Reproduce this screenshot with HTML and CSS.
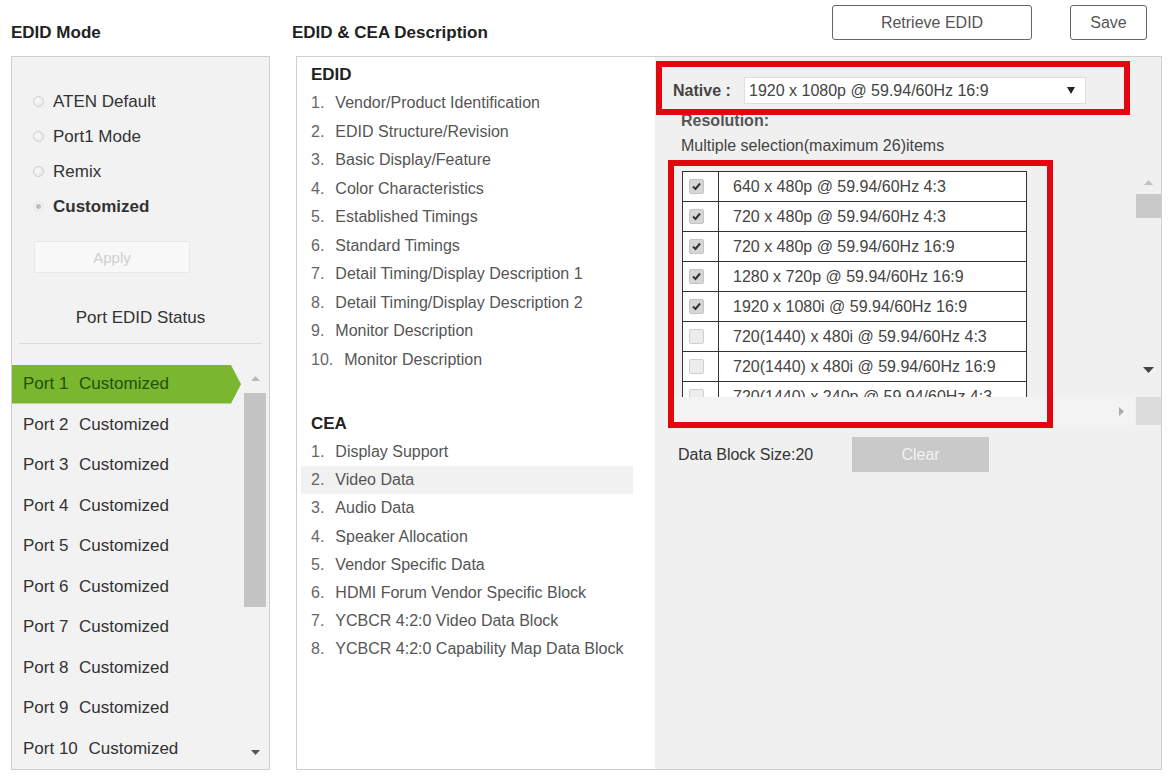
FILE: index.html
```html
<!doctype html>
<html lang="en">
<head>
    <meta charset="UTF-8">
    <meta name="viewport" content="width=device-width, initial-scale=1.0">
    <title>EDID Settings</title>

    <link rel="stylesheet" href="styles.css">
</head>
<body>

<div class="page">
    <div class="col-head">
        <h2 class="title">EDID Mode</h2>
    </div>
    <div class="col-head col-head-main">
        <h2 class="title">EDID &amp; CEA Description</h2>
        <div class="head-btns">
            <button class="btn btn-retrieve">Retrieve EDID</button>
            <button class="btn btn-save">Save</button>
        </div>
    </div>

    <aside class="panel mode-panel">
        <ul class="radios">
            <li><span class="radio"></span>ATEN Default</li>
            <li><span class="radio"></span>Port1 Mode</li>
            <li><span class="radio"></span>Remix</li>
            <li class="on"><span class="radio"></span>Customized</li>
        </ul>
        <button class="btn-apply" disabled>Apply</button>
        <div class="status-title">Port EDID Status</div>
        <div class="sep"></div>

        <div class="port-box">
            <ul class="ports">
                <li class="active"><span class="pn">Port 1</span> Customized</li>
                <li><span class="pn">Port 2</span> Customized</li>
                <li><span class="pn">Port 3</span> Customized</li>
                <li><span class="pn">Port 4</span> Customized</li>
                <li><span class="pn">Port 5</span> Customized</li>
                <li><span class="pn">Port 6</span> Customized</li>
                <li><span class="pn">Port 7</span> Customized</li>
                <li><span class="pn">Port 8</span> Customized</li>
                <li><span class="pn">Port 9</span> Customized</li>
                <li><span class="pn">Port 10</span> Customized</li>
            </ul>
            <div class="vbar">
                <div class="vbar-up">
                    <svg width="9" height="5" viewBox="0 0 9 5"><path d="M0 5 L4.5 0 L9 5 Z" fill="#b8b8b8"/></svg>
                </div>
                <div class="vbar-track"><div class="vbar-thumb"></div></div>
                <div class="vbar-down">
                    <svg width="9" height="5" viewBox="0 0 9 5"><path d="M0 0 L9 0 L4.5 5 Z" fill="#555"/></svg>
                </div>
            </div>
        </div>
    </aside>

    <section class="panel desc-panel">
        <div class="desc-list">
            <h3 class="group">EDID</h3>
            <ol class="items">
                <li><span class="num">1.</span>Vendor/Product Identification</li>
                <li><span class="num">2.</span>EDID Structure/Revision</li>
                <li><span class="num">3.</span>Basic Display/Feature</li>
                <li><span class="num">4.</span>Color Characteristics</li>
                <li><span class="num">5.</span>Established Timings</li>
                <li><span class="num">6.</span>Standard Timings</li>
                <li><span class="num">7.</span>Detail Timing/Display Description 1</li>
                <li><span class="num">8.</span>Detail Timing/Display Description 2</li>
                <li><span class="num">9.</span>Monitor Description</li>
                <li><span class="num">10.</span>Monitor Description</li>
            </ol>

            <h3 class="group group-cea">CEA</h3>
            <ol class="items items-cea">
                <li><span class="num">1.</span>Display Support</li>
                <li class="current"><span class="num">2.</span>Video Data</li>
                <li><span class="num">3.</span>Audio Data</li>
                <li><span class="num">4.</span>Speaker Allocation</li>
                <li><span class="num">5.</span>Vendor Specific Data</li>
                <li><span class="num">6.</span>HDMI Forum Vendor Specific Block</li>
                <li><span class="num">7.</span>YCBCR 4:2:0 Video Data Block</li>
                <li><span class="num">8.</span>YCBCR 4:2:0 Capability Map Data Block</li>
            </ol>
        </div>

        <div class="desc-detail">
            <div class="native-row">
                <span class="native-label">Native :</span>
                <div class="select">
                    <span>1920 x 1080p @ 59.94/60Hz 16:9</span>
                    <svg width="8" height="7" viewBox="0 0 8 7"><path d="M0 0 L8 0 L4 7 Z" fill="#222"/></svg>
                </div>
            </div>
            <div class="res-title">Resolution:</div>
            <div class="res-note">Multiple selection(maximum 26)items</div>

            <div class="res-scroll">
                <div class="res-view">
                    <table class="res-table">
                        <tr><td class="ck"><span class="box on"><svg width="11" height="11" viewBox="0 0 11 11"><path d="M2 5.5 L4.5 8 L9 2.5" fill="none" stroke="#333" stroke-width="2"/></svg></span></td><td>640 x 480p @ 59.94/60Hz 4:3</td></tr>
                        <tr><td class="ck"><span class="box on"><svg width="11" height="11" viewBox="0 0 11 11"><path d="M2 5.5 L4.5 8 L9 2.5" fill="none" stroke="#333" stroke-width="2"/></svg></span></td><td>720 x 480p @ 59.94/60Hz 4:3</td></tr>
                        <tr><td class="ck"><span class="box on"><svg width="11" height="11" viewBox="0 0 11 11"><path d="M2 5.5 L4.5 8 L9 2.5" fill="none" stroke="#333" stroke-width="2"/></svg></span></td><td>720 x 480p @ 59.94/60Hz 16:9</td></tr>
                        <tr><td class="ck"><span class="box on"><svg width="11" height="11" viewBox="0 0 11 11"><path d="M2 5.5 L4.5 8 L9 2.5" fill="none" stroke="#333" stroke-width="2"/></svg></span></td><td>1280 x 720p @ 59.94/60Hz 16:9</td></tr>
                        <tr><td class="ck"><span class="box on"><svg width="11" height="11" viewBox="0 0 11 11"><path d="M2 5.5 L4.5 8 L9 2.5" fill="none" stroke="#333" stroke-width="2"/></svg></span></td><td>1920 x 1080i @ 59.94/60Hz 16:9</td></tr>
                        <tr><td class="ck"><span class="box"></span></td><td>720(1440) x 480i @ 59.94/60Hz 4:3</td></tr>
                        <tr><td class="ck"><span class="box"></span></td><td>720(1440) x 480i @ 59.94/60Hz 16:9</td></tr>
                        <tr><td class="ck"><span class="box"></span></td><td>720(1440) x 240p @ 59.94/60Hz 4:3</td></tr>
                    </table>
                </div>
                <div class="res-vbar">
                    <div class="arrow-up"><svg width="9" height="5" viewBox="0 0 9 5"><path d="M0 5 L4.5 0 L9 5 Z" fill="#c0c0c0"/></svg></div>
                    <div class="res-thumb"></div>
                    <div class="arrow-down"><svg width="11" height="6" viewBox="0 0 11 6"><path d="M0 0 L11 0 L5.5 6 Z" fill="#444"/></svg></div>
                </div>
                <div class="res-hbar">
                    <svg width="5" height="9" viewBox="0 0 5 9"><path d="M0 0 L5 4.5 L0 9 Z" fill="#aaa"/></svg>
                </div>
                <div class="res-corner"></div>
            </div>

            <div class="block-row">
                <span class="block-size">Data Block Size:20</span>
                <button class="btn-clear" disabled>Clear</button>
            </div>

            <!-- annotation frames -->
            <div class="mark mark-native"></div>
            <div class="mark mark-res"></div>
        </div>
    </section>
</div>

</body>
</html>
```

FILE: styles.css
```css
body {
    margin: 0;
    font: 16px "Liberation Sans", Arial, sans-serif;
    color: #333;
    background: #fff;
}

ul, ol {
    list-style: none;
    margin: 0;
    padding: 0;
}

button {
    font-family: inherit;
}

.page {
    display: grid;
    grid-template-columns: 259px 866px;
    grid-template-rows: 51px 714px;
    column-gap: 26px;
    padding: 5px 0 0 11px;
}

/* headers */
.col-head {
    display: flex;
    align-items: flex-start;
}

.col-head-main {
    justify-content: space-between;
    padding-right: 15px;
}

.title {
    margin: 18px 0 0;
    font-size: 17px;
    line-height: 20px;
    font-weight: 700;
    color: #222;
}

.col-head-main .title {
    margin-left: -4px;
}

.head-btns {
    display: flex;
    gap: 38px;
}

.btn {
    height: 35px;
    background: #fff;
    border: 1px solid #666;
    border-radius: 3px;
    font-size: 16px;
    color: #555;
}

.btn-retrieve {
    width: 200px;
}

.btn-save {
    width: 77px;
}

.panel {
    box-sizing: border-box;
    border: 1px solid #cfcfcf;
    height: 714px;
}

/* left panel */
.mode-panel {
    background: #f2f2f2;
    padding-top: 27px;
    display: flex;
    flex-direction: column;
}

.radios li {
    height: 35px;
    display: flex;
    align-items: center;
    padding-left: 21px;
    font-size: 17px;
    color: #333;
}

.radios li.on {
    font-weight: 700;
}

.radio {
    width: 11px;
    height: 11px;
    box-sizing: border-box;
    border-radius: 50%;
    border: 1px solid #cdcdcd;
    background: radial-gradient(circle at 40% 40%, #fafafa, #e2e2e2);
    margin-right: 9px;
}

.on .radio {
    border-color: #e6e6e6;
    background: radial-gradient(circle, #bdbdbd 0 2px, #f0f0f0 3px);
}

.btn-apply {
    margin: 17px 0 0 22px;
    width: 156px;
    height: 32px;
    background: #f8f8f8;
    border: 1px solid #e8e8e8;
    color: #cfcfcf;
    font-size: 15px;
}

.status-title {
    margin-top: 35px;
    line-height: 20px;
    text-align: center;
    font-size: 17px;
    color: #333;
}

.sep {
    margin: 15px 7px 0;
    height: 1px;
    background: #dcdcdc;
}

.port-box {
    margin-top: 20px;
    flex: 1;
    display: flex;
}

.ports {
    width: 229px;
}

.ports li {
    height: 40.5px;
    line-height: 40.5px;
    padding-left: 11px;
    font-size: 17px;
    color: #333;
}

.ports .pn {
    margin-right: 6px;
}

.ports li.active {
    background: #7ab630;
    color: #24500a;
    clip-path: polygon(0 1px, calc(100% - 10px) 1px, 100% 50%, calc(100% - 10px) calc(100% - 1px), 0 calc(100% - 1px));
}

.vbar {
    width: 22px;
    margin-left: 3px;
    display: flex;
    flex-direction: column;
}

.vbar-up {
    height: 28px;
    display: flex;
    align-items: center;
    justify-content: center;
}

.vbar-track {
    flex: 1;
}

.vbar-thumb {
    height: 214px;
    margin-top: 1px;
    background: #c4c4c4;
}

.vbar-down {
    height: 34px;
    display: flex;
    align-items: center;
    justify-content: center;
}

/* description panel */
.desc-panel {
    display: grid;
    grid-template-columns: 358px 1fr;
}

.desc-list {
    background: #fff;
    padding: 8px 0 0 4px;
}

.group {
    margin: 0 0 4px;
    padding-left: 10px;
    font-size: 17px;
    line-height: 20px;
    font-weight: 700;
    color: #222;
}

.group-cea {
    margin-top: 40px;
}

.items li {
    width: 332px;
    box-sizing: border-box;
    height: 28.5px;
    line-height: 28.5px;
    padding-left: 10px;
    color: #555;
}

.items-cea li {
    height: 28.2px;
    line-height: 28.2px;
}

.items li.current {
    background: #f1f1f1;
}

.num {
    margin-right: 11px;
    color: #666;
}

.desc-detail {
    position: relative;
    background: #f0f0f0;
    padding-top: 20px;
}

.native-row {
    display: flex;
    align-items: center;
    margin-left: 18px;
    height: 27px;
}

.native-label {
    width: 71px;
    font-weight: 700;
    color: #444;
}

.select {
    box-sizing: border-box;
    width: 342px;
    height: 27px;
    background: #fff;
    border: 1px solid #dedede;
    padding: 0 10px 0 4px;
    display: flex;
    align-items: center;
    justify-content: space-between;
    color: #444;
}

.res-title {
    margin-top: 8px;
    padding-left: 26px;
    line-height: 18px;
    font-weight: 700;
    color: #555;
}

.res-note {
    margin-top: 7px;
    padding-left: 26px;
    line-height: 18px;
    color: #444;
}

.res-scroll {
    margin: 10px 0 0 13px;
    display: grid;
    grid-template-columns: 1fr 28px;
    grid-template-rows: 232px 28px;
}

.res-view {
    overflow: hidden;
    padding: 6px 0 0 14px;
}

.res-table {
    width: 345px;
    border-collapse: collapse;
    background: #fff;
}

.res-table td {
    height: 29px;
    padding: 0 0 0 14px;
    border: 1px solid #333;
    color: #444;
    white-space: nowrap;
}

.res-table td.ck {
    width: 29px;
    padding-left: 6px;
}

.box {
    display: block;
    width: 15px;
    height: 15px;
    box-sizing: border-box;
    border: 1px solid #d0d0d0;
    background: #ececec;
    border-radius: 2px;
}

.box.on {
    background: #d6d6d6;
    border-color: #c4c4c4;
    padding: 1px;
}

.box svg {
    display: block;
}

.res-vbar {
    display: flex;
    flex-direction: column;
    align-items: flex-end;
}

.arrow-up {
    width: 25px;
    height: 24px;
    display: flex;
    align-items: flex-end;
    justify-content: center;
    padding-bottom: 4px;
    box-sizing: border-box;
}

.res-thumb {
    margin-top: 5px;
    width: 25px;
    height: 24px;
    background: #c9c9c9;
}

.arrow-down {
    margin-top: auto;
    width: 25px;
    height: 30px;
    display: flex;
    align-items: flex-start;
    justify-content: center;
}

.res-hbar {
    background: #f3f3f3;
    display: flex;
    align-items: center;
    justify-content: flex-end;
    padding-right: 9px;
}

.res-corner {
    background: #dcdcdc;
    margin-left: 3px;
}

.block-row {
    display: flex;
    align-items: center;
    margin-top: 12px;
    padding-left: 23px;
}

.block-size {
    width: 174px;
    color: #333;
}

.btn-clear {
    width: 137px;
    height: 35px;
    border: none;
    background: #c9c9c9;
    color: #f2f2f2;
    font-size: 16px;
}

/* red annotation frames */
.mark {
    position: absolute;
    box-sizing: border-box;
    border: 6px solid #e3060f;
}

.mark-native {
    left: 1px;
    top: 4px;
    width: 474px;
    height: 54px;
}

.mark-res {
    left: 13px;
    top: 103px;
    width: 385px;
    height: 268px;
}
```
